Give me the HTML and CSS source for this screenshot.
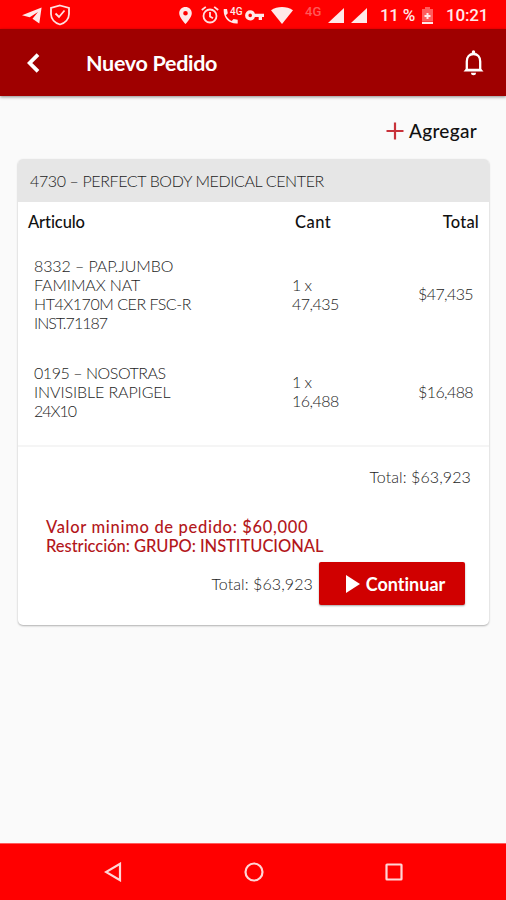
FILE: index.html
```html
<!DOCTYPE html>
<html lang="es">
<head>
<meta charset="utf-8">
<meta name="viewport" content="width=device-width">
<title>Nuevo Pedido</title>
<link rel="stylesheet" href="styles.css">
</head>
<body>
<div class="status">
  <svg class="telegram" width="20" height="17" viewBox="0 0 20 17"><path d="M0 8.2 19.6.6 17.3 16.4 10.5 11.8 16 5 7.7 10.2Z"/></svg>
  <svg class="shield" width="22" height="22" viewBox="0 0 22 22"><path class="line" d="M11 1.5 20 4V10C20 15 16 19 11 20.5C6 19 2 15 2 10V4Z M6.5 9.5 10 13 15.5 6.5"/></svg>
  <svg class="pin" width="13" height="17" viewBox="0 0 13 17"><path fill-rule="evenodd" d="M6.5 0C2.9 0 .2 2.7.2 6.2.2 10.5 6.5 17 6.5 17S12.8 10.5 12.8 6.2C12.8 2.7 10.1 0 6.5 0ZM6.5 3.9a2.3 2.3 0 1 1 0 4.6a2.3 2.3 0 0 1 0-4.6Z"/></svg>
  <svg class="alarm" width="18" height="18" viewBox="0 0 18 18"><path class="line" d="M9 3.5a6.5 6.5 0 1 1 0 13a6.5 6.5 0 0 1 0-13ZM9 6V10.5L12 12.3M.8 4 4.8.9M17.2 4 13.2.9"/></svg>
  <span class="call"><svg width="15" height="15" viewBox="0 0 15 15"><path d="M.8 0H4L4.8 4.3 2.9 6.2C4.2 8.8 6.1 10.6 8.6 11.9L10.6 10 14.7 10.8V14.5C6 15.2-.2 8.8.8 0Z"/></svg><b>4G</b></span>
  <svg class="key" width="19" height="11" viewBox="0 0 19 11"><path fill-rule="evenodd" d="M5.2.3C8 .3 9.2 1.8 9.9 3.7H19V7H17V10H13.7V7H9.9C9.2 9 8 10.5 5.2 10.5A5.1 5.1 0 0 1 5.2.3ZM5.2 3.6a1.8 1.8 0 1 0 0 3.6a1.8 1.8 0 0 0 0-3.6Z"/></svg>
  <svg class="wifi" width="22" height="17" viewBox="0 0 22 17"><path d="M0 3.3C6.5-1.1 15.5-1.1 22 3.3L11 17Z"/></svg>
  <span class="net">4G</span>
  <svg class="sig1" width="16" height="15" viewBox="0 0 16 15"><path d="M16 0V15H0Z"/></svg>
  <svg class="sig2" width="16" height="15" viewBox="0 0 16 15"><path d="M16 0V15H0Z"/></svg>
  <span class="pct">11 %</span>
  <svg class="batt" width="11" height="17" viewBox="0 0 11 17"><path opacity=".4" d="M0 2H3V0H8V2H11V14H0Z"/><path d="M0 14.7H11V17H0ZM4.5 6H6.5V8H8.5V10H6.5V12H4.5V10H2.5V8H4.5Z"/></svg>
  <span class="clock">10:21</span>
</div>
<header class="appbar">
  <svg class="back" width="14" height="20" viewBox="0 0 14 20"><path d="M12 1.7 3.7 10 12 18.3"/></svg>
  <h1>Nuevo Pedido</h1>
  <svg class="bell" width="21" height="26" viewBox="0 0 21 26"><path fill="none" stroke="#fff" stroke-width="2.3" d="M3.8 20V11.5C3.8 7 6.5 4 10.5 4S17.2 7 17.2 11.5V20"/><path fill="#fff" d="M8.8 4V2A1.7 1.7 0 0 1 12.2 2V4ZM.5 21.5 3 18.8H18L20.5 21.5ZM8 22.8H13A2.5 2.5 0 0 1 8 22.8Z"/></svg>
</header>
<main>
  <div class="add"><svg width="18" height="18" viewBox="0 0 18 18"><path d="M9 .5V17.5M.5 9H17.5"/></svg><span>Agregar</span></div>
  <section class="card">
    <div class="client">4730 – PERFECT BODY MEDICAL CENTER</div>
    <div class="head"><span class="h-art">Articulo</span><span class="h-cant">Cant</span><span class="h-total">Total</span></div>
    <div class="item first">
      <div class="name">8332 – PAP.JUMBO<br>FAMIMAX NAT<br><span class="tight">HT4X170M CER FSC-R</span><br><span class="tighter">INST.71187</span></div>
      <div class="qty">1 x<br>47,435</div><div class="amount">$47,435</div>
    </div>
    <div class="item second">
      <div class="name"><span class="tight">0195 – NOSOTRAS</span><br>INVISIBLE RAPIGEL<br><span class="tighter">24X10</span></div>
      <div class="qty">1 x<br>16,488</div><div class="amount">$16,488</div>
    </div>
    <div class="subtotal">Total: $63,923</div>
    <div class="notice"><span class="minimum">Valor minimo de pedido: $60,000</span><br><span class="restriction">Restricción: GRUPO: INSTITUCIONAL</span></div>
    <div class="actions"><span class="sum">Total: $63,923</span><button><svg width="14" height="18" viewBox="0 0 14 18"><path d="M0 0 14 9 0 18Z"/></svg><span>Continuar</span></button></div>
  </section>
</main>
<nav>
  <svg class="nav-back" width="18" height="20" viewBox="0 0 18 20"><path d="M16 1.8V18.2L2 10Z"/></svg>
  <svg class="nav-home" width="20" height="20" viewBox="0 0 20 20"><circle cx="10" cy="10" r="8.5"/></svg>
  <svg class="nav-recent" width="18" height="18" viewBox="0 0 18 18"><rect x="1.5" y="1.5" width="15" height="15" rx=".5"/></svg>
</nav>
</body>
</html>
```
FILE: styles.css
```css
* { box-sizing: border-box; }
body { margin: 0; width: 506px; height: 900px; display: flex; flex-direction: column; background: #fafafa; font-family: Lato, "Open Sans", sans-serif; font-size: 16px; font-weight: 300; font-variant-ligatures: none; line-height: 19px; color: #1c1c1c; overflow: hidden; }
svg { display: block; flex: none; }
span { white-space: nowrap; }

.status { height: 29px; flex: none; display: flex; align-items: center; padding-top: 1px; background: #f00; color: #ffe9e9; fill: #ffe9e9; font-family: Roboto, sans-serif; font-weight: 500; font-size: 17px; }
.status .line { fill: none; stroke: #ffe0e0; stroke-width: 1.8; }
.telegram { margin-left: 22px; }
.shield { margin-left: 7px; }
.pin { margin-left: 108px; }
.alarm { margin-left: 9px; }
.call { display: flex; width: 20px; margin-left: 4px; align-items: center; }
.call svg { margin-top: 2px; }
.call b { font-size: 10px; font-weight: 500; line-height: 10px; margin: -7px 0 0 -8px; }
.key { margin-left: 2px; }
.wifi { margin-left: 7px; }
.net { margin-left: 12px; width: 18px; font-size: 13px; color: #ff5858; line-height: 13px; margin-top: -7px; }
.sig1 { margin-left: 5px; }
.sig2 { margin-left: 7px; }
.pct { margin-left: 13px; width: 35px; letter-spacing: -.3px; }
.batt { margin-left: 7px; }
.clock { margin-left: 13px; letter-spacing: -.2px; }

.appbar { height: 67px; flex: none; display: flex; align-items: center; padding: 0 22px 0 26px; background: #9f0000; color: #fff; box-shadow: 0 1px 3px rgba(0,0,0,.45); }
.back path { fill: none; stroke: #fff; stroke-width: 3.8; }
.appbar h1 { margin: 1px auto 0 46px; font-size: 21.5px; line-height: 28px; font-weight: 700; letter-spacing: -.3px; }

main { flex: 1; padding: 22px 17px 0 18px; }
.add { display: flex; justify-content: flex-end; align-items: center; height: 25px; padding-right: 12px; font-size: 19px; font-weight: 500; color: #111; letter-spacing: .3px; }
.add svg { margin-right: 5px; }
.add path { stroke: #c8323a; stroke-width: 2.2; }
.card { margin-top: 16px; height: 466px; background: #fff; border-radius: 5px; box-shadow: 0 1px 2px rgba(0,0,0,.3); overflow: hidden; }
.client { height: 43px; padding: 12px 12px 0; background: #e6e6e6; letter-spacing: -.38px; }
.head { display: flex; height: 39px; padding: 11px 10px 0; font-size: 16.5px; font-weight: 500; color: #111; }
.h-art { width: 267px; letter-spacing: -.1px; }
.h-cant { letter-spacing: .5px; }
.h-total { margin-left: auto; letter-spacing: .2px; }
.item { display: flex; align-items: center; padding: 0 16px; }
.first { height: 105px; }
.second { height: 88px; margin-top: 1px; }
.name { width: 258px; letter-spacing: -.1px; }
.tight { letter-spacing: -.45px; }
.tighter { letter-spacing: -1px; }
.qty { letter-spacing: -.5px; }
.amount { margin-left: auto; letter-spacing: -.6px; }
.subtotal { margin-top: 10px; height: 63px; border-top: 2px solid #f5f5f5; padding: 20px 18px 0; text-align: right; letter-spacing: .1px; }
.notice { margin: 10px 28px 0; color: #b3171b; font-size: 16.5px; font-weight: 500; }
.minimum { letter-spacing: .68px; }
.restriction { letter-spacing: -.03px; }
.actions { display: flex; align-items: center; justify-content: flex-end; margin: 6px 24px 0; }
.sum { letter-spacing: .1px; }
.actions button { display: flex; align-items: center; justify-content: center; width: 146px; height: 43px; margin-left: 6px; padding: 0; padding-left: 7px; border: 0; border-radius: 2px; background: #d00000; color: #fff; fill: #fff; font: 700 18px/20px Lato, sans-serif; font-variant-ligatures: none; box-shadow: 0 1px 2px rgba(0,0,0,.35); }
button svg { margin-right: 6px; }

nav { height: 57px; flex: none; display: flex; align-items: center; background: #f00; border-top: 1px solid #ff5c5c; fill: none; stroke: #ffd5d5; stroke-width: 2.2; }
.nav-back { margin-left: 104px; }
.nav-home { margin-left: 122px; }
.nav-recent { margin-left: 121px; }
```
